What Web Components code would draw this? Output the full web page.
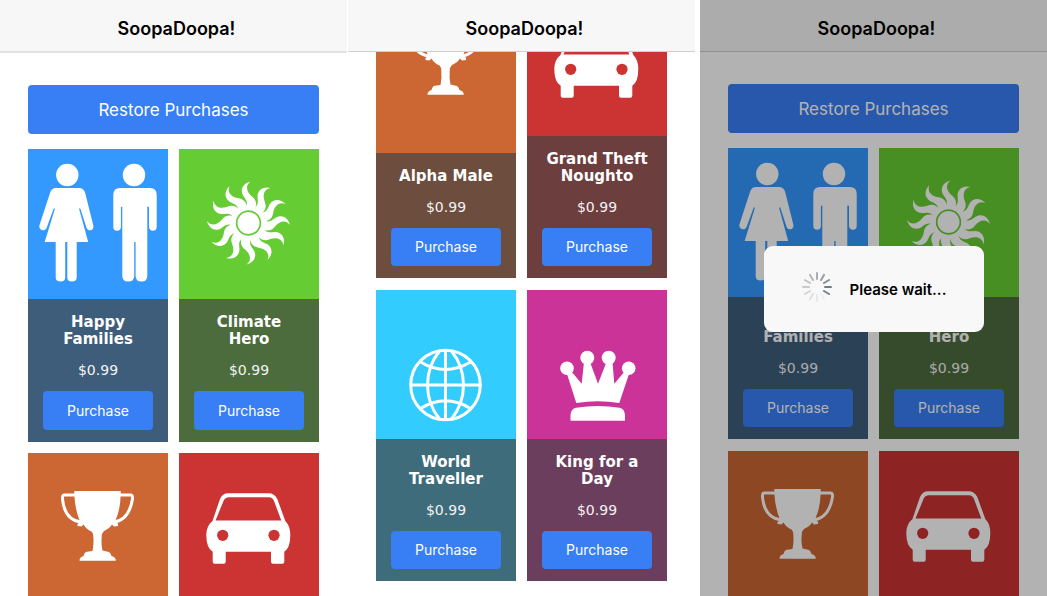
<!DOCTYPE html>
<html lang="en">
<head>
<meta charset="utf-8">
<title>SoopaDoopa!</title>
<style>
  body { margin: 0; background: #fff; font-family: Inter, "Liberation Sans", sans-serif; }
</style>
</head>
<body>
<shop-gallery>
  <shop-screen class="first" heading="SoopaDoopa!">
    <restore-button></restore-button>
    <card-grid>
      <shop-card icon="family" color="#3399ff" name="Happy Families" price="$0.99"></shop-card>
      <shop-card icon="sun" color="#66cc33" name="Climate Hero" price="$0.99"></shop-card>
      <shop-card icon="trophy" color="#cc6633"></shop-card>
      <shop-card icon="car" color="#cc3333"></shop-card>
    </card-grid>
  </shop-screen>
  <shop-screen scrolled heading="SoopaDoopa!">
    <card-grid>
      <shop-card icon="trophy" color="#cc6633" name="Alpha Male" price="$0.99"></shop-card>
      <shop-card icon="car" color="#cc3333" name="Grand Theft Noughto" price="$0.99"></shop-card>
      <shop-card icon="globe" color="#33ccff" name="World Traveller" price="$0.99"></shop-card>
      <shop-card icon="crown" color="#cc3399" name="King for a Day" price="$0.99"></shop-card>
    </card-grid>
  </shop-screen>
  <shop-screen class="last" heading="SoopaDoopa!">
    <restore-button></restore-button>
    <card-grid>
      <shop-card icon="family" color="#3399ff" name="Happy Families" price="$0.99"></shop-card>
      <shop-card icon="sun" color="#66cc33" name="Climate Hero" price="$0.99"></shop-card>
      <shop-card icon="trophy" color="#cc6633"></shop-card>
      <shop-card icon="car" color="#cc3333"></shop-card>
    </card-grid>
    <wait-dialog slot="overlay">Please wait...</wait-dialog>
  </shop-screen>
</shop-gallery>

<script>
const rays = Array.from({ length: 12 }, (_, i) =>
  `<path transform="rotate(${i * 30})" d="M2-41.500C-6-39.500-8.500-33-5.500-27.500C-3-23.500 1-21-4-13L6-13C9-19 7.500-23.500 3.500-26.500C-1.500-30.500-4-37 2-41.500Z"/>`).join('');

const icons = {
  family: `
    <circle cx="39.300" cy="26" r="11.200"/>
    <path d="M28 39H51Q55.500 39 57.200 44L65.300 76.500C66.500 81 60.500 83.500 58.600 79L52.300 59.500H51L60.200 93H48.700V128.500Q48.700 132.500 44 132.500T39.300 128.500V93H37.200V128.500Q37.200 132.500 32.500 132.500T27.700 128.500V93H16.700L27 59.500H25.700L18.600 79C16.500 83.500 10.300 81 11.400 76.500L22 44Q23.500 39 28 39Z"/>
    <circle cx="106" cy="26" r="11.200"/>
    <path d="M92 39H122Q128.700 39 128.700 46V78Q128.700 81.700 125 81.700T121 78V57.700H119.300V127Q119.300 132.500 113.500 132.500T107.600 127V93H106.200V127Q106.200 132.500 100.300 132.500T94.300 127V57.700H92.900V78Q92.900 81.700 89.100 81.700T85.300 78V46Q85.300 39 92 39Z"/>`,
  sun: `<g transform="translate(69.500 74)">${rays}<circle r="13.500" fill="none" stroke="#fff" stroke-width="1.600"/><circle r="11"/></g>`,
  trophy: `
    <path d="M46.300 38H92.700V41.500Q92.300 57 87.600 67L86.500 69L90 70.500V73L86 73.500L84 71.500Q82 75 76 78Q73.700 80 73.700 84Q73 92 74.500 97.500L81 99Q83 100.500 83.500 103Q87.800 104 87.800 107.800H51.500Q51.500 104 55.500 103Q56.500 99 59 98.800L64.500 98Q66 91 65.300 84Q65.300 80 63.500 78.500Q58 76 55.500 71.500L53.500 73.500L49.500 73V71L52.500 69L51.400 67Q47 56 46.300 41.500Z"/>
    <path d="M47 42H36Q34.300 42 34.500 46Q36.500 67 53 69M92 42H103Q104.700 42 104.500 46Q101 67 86 69" fill="none" stroke="#fff" stroke-width="3"/>`,
  car: `
    <path fill-rule="evenodd" d="M49 40.300H89.500Q95.500 40.300 98.300 46L106.300 68Q111.300 73 111.300 82Q111.300 95 105.300 98.700V108.700Q105.300 110.800 103.300 110.800H94Q92 110.800 92 108.700V98.700H46.700V108.700Q46.700 110.800 44.700 110.800H35.700Q33.700 110.800 33.700 108.700V98.700Q27.300 95 27.300 82Q27.300 73 33.500 68L41 46Q43.500 40.300 49 40.300ZM50 44.300Q46 44.300 44.500 48L36.500 67.500H102.300L95 48Q93.500 44.300 90 44.300Z"/>
    <circle cx="43.700" cy="82.300" r="5.600" fill="#c33"/><circle cx="95" cy="82.300" r="5.600" fill="#c33"/>`,
  globe: `<g transform="translate(69.500 95)" fill="none" stroke="#fff" stroke-width="3">
    <circle r="34.800"/><path d="M0-35V35M-35 0H35M-6-34C-22-14-22 14-6 34M6-34C22-14 22 14 6 34M-25-23Q0-8 25-23M-25 23.500Q0 8 25 23.500"/></g>`,
  crown: `<g transform="translate(0 -1)">
    <circle cx="40" cy="79.300" r="6.800"/><circle cx="60.300" cy="68.700" r="7"/><circle cx="81.700" cy="68.700" r="7"/><circle cx="101.700" cy="79.300" r="6.800"/>
    <path d="M40 85L44 82L54.700 94.700L57 73H63L71 94.700L79.500 73H85.500L87.300 94.700L98 82L102 85L92.300 114Q71 110.500 49.300 114Z"/>
    <path d="M43.500 131.700V126Q44 119.500 49 118.700Q71 115.500 92.500 118.700Q97.500 119.500 98 126V131.700Z"/></g>`
};

class ShopElement extends HTMLElement {
  render(html) {
    if (!this.shadowRoot) this.attachShadow({ mode: 'open' }).innerHTML = html;
  }
}

customElements.define('shop-gallery', class extends ShopElement {
  connectedCallback() {
    this.render(`
      <style>
        :host { display: flex; height: 100vh; }
        ::slotted(shop-screen) { flex: 1 1 0; }
        ::slotted(.first) { --rule: 2px; --rule-color: #e2e2e2; --art: 150px; --buy: 39px; --rows: 11px; margin-right: 1px; }
        ::slotted(.last) { margin-left: 5px; }
      </style>
      <slot></slot>`);
  }
});

customElements.define('shop-screen', class extends ShopElement {
  connectedCallback() {
    this.render(`
      <style>
        :host { display: flex; flex-direction: column; min-width: 0; position: relative; overflow: hidden; background: #fff; }
        header { flex: none; box-sizing: content-box; height: 51px; padding-left: 6px; display: flex; align-items: center; justify-content: center;
          background: #f7f7f7; border-bottom: var(--rule, 1px) solid var(--rule-color, #cfcfcf); z-index: 1; }
        h1 { margin: 6px 0 0; font-size: 18px; line-height: 24px; font-weight: 600; color: #000; }
        main { flex: 1 1 0; min-height: 0; display: flex; flex-direction: column; gap: 15px; padding: 32px 28px 15px; }
        :host([scrolled]) main { justify-content: flex-end; padding-top: 0; }
      </style>
      <header><h1>${this.getAttribute('heading')}</h1></header>
      <main><slot></slot></main>
      <slot name="overlay"></slot>`);
  }
});

customElements.define('restore-button', class extends ShopElement {
  connectedCallback() {
    this.render(`
      <style>
        :host { display: block; flex: none; }
        button { display: block; width: 100%; height: 49px; border: 0; border-radius: 4px; padding: 0;
          background: #387ef5; color: #fff; font-family: inherit; font-size: 17px; line-height: 24px; }
      </style>
      <button type="button">Restore Purchases</button>`);
  }
});

customElements.define('card-grid', class extends ShopElement {
  connectedCallback() {
    this.render(`
      <style>
        :host { flex: none; display: grid; grid-template-columns: repeat(2, minmax(0, 1fr)); gap: var(--rows, 12px) 11px; }
      </style>
      <slot></slot>`);
  }
});

customElements.define('shop-card', class extends ShopElement {
  connectedCallback() {
    const info = this.hasAttribute('name') ? `
      <div class="info">
        <h2>${this.getAttribute('name')}</h2>
        <p>${this.getAttribute('price')}</p>
        <button type="button">Purchase</button>
      </div>` : '';
    this.render(`
      <style>
        :host { display: flex; flex-direction: column; background: ${this.getAttribute('color')}; color: #fff; text-align: center; }
        .art { flex: 1 0 var(--art, 149px); min-height: 0; overflow: hidden; display: flex; justify-content: center; align-items: flex-start; }
        svg { flex: none; width: 140px; height: 150px; fill: #fff; }
        .info { flex: none; padding: 15px 15px 12px; background: rgba(67, 67, 67, .7); font-family: Verdana, "DejaVu Sans", sans-serif; }
        h2 { margin: 0; font-size: 15px; line-height: 17px; font-weight: 700; }
        p { margin: 12px 0 11px; font-size: 14px; line-height: 20px; color: #f2f2f2; }
        button { display: block; width: 100%; height: var(--buy, 38px); border: 0; border-radius: 4px; padding: 0;
          background: #387ef5; color: #fff; font-family: Inter, "Liberation Sans", sans-serif; font-size: 14px; line-height: 20px; }
      </style>
      <div class="art"><svg viewBox="0 0 140 150" aria-hidden="true">${icons[this.getAttribute('icon')]}</svg></div>
      ${info}`);
  }
});

customElements.define('wait-dialog', class extends ShopElement {
  connectedCallback() {
    const shades = ['#a9adb2', '#989da3', '#858b92', '#737a82', '#79818a', '#f0f0f0', '#e8e8e9', '#dfe0e1', '#d3d4d6', '#c8cacc', '#bec1c4', '#b4b7bb'];
    const spokes = shades.map((shade, i) => `<path stroke="${shade}" transform="rotate(${i * 30})" d="M0-8V-14"/>`).join('');
    this.render(`
      <style>
        :host { position: absolute; inset: 0; z-index: 2; display: flex; align-items: center; justify-content: center;
          padding-bottom: 18px; background: rgba(0, 0, 0, .3); }
        .box { box-sizing: border-box; width: 220px; height: 86px; padding-top: 2px; border-radius: 9px; background: #f8f8f8;
          display: flex; align-items: center; justify-content: center; gap: 17px; }
        svg { flex: none; width: 32px; height: 32px; margin-bottom: 6px; stroke-width: 2; stroke-linecap: round; }
        p { margin: 0; font-size: 15px; line-height: 20px; font-weight: 600; color: #000; }
      </style>
      <div class="box" role="alertdialog" aria-busy="true">
        <svg viewBox="-16 -16 32 32" aria-hidden="true">${spokes}</svg>
        <p><slot></slot></p>
      </div>`);
  }
});
</script>
</body>
</html>
